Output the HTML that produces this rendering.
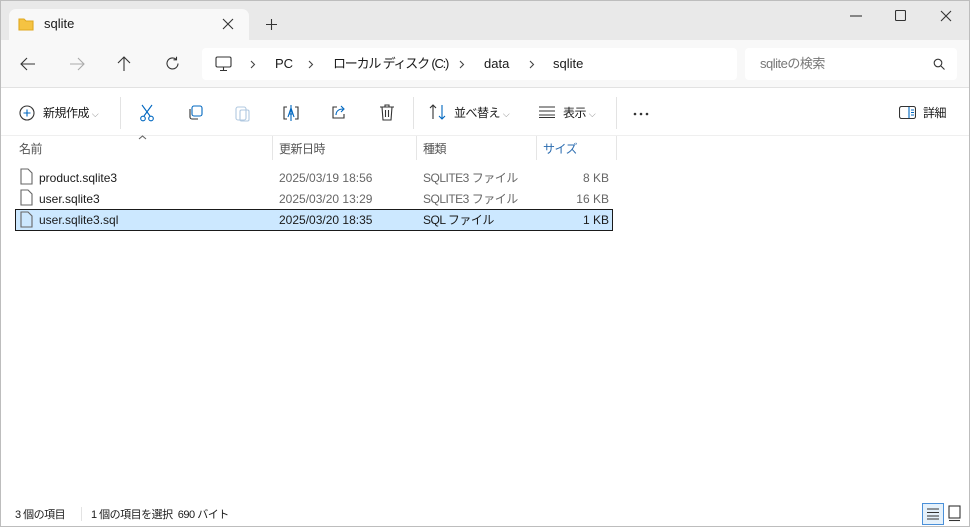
<!DOCTYPE html><html><head><meta charset="utf-8"><style>
*{box-sizing:border-box;margin:0;padding:0}
body{width:970px;height:527px;overflow:hidden;font-family:"Liberation Sans","Noto Sans CJK JP",sans-serif;font-size:12px;line-height:14px;color:#1a1a1a;background:#fff;position:relative}
.a{position:absolute;white-space:nowrap}
.win{position:absolute;left:0;top:0;width:970px;height:527px;border:1px solid #bdbdbd}
svg{position:absolute;fill:none;stroke:#333;stroke-width:1.1}
.hd{color:#555;font-size:12px;top:142px}
.r{position:absolute;font-size:12px;color:#1a1a1a;white-space:nowrap}
.g{color:#666}
.j{letter-spacing:-0.5px}
</style></head><body>
<div class="a" style="left:0;top:0;width:970px;height:40px;background:#e9e9e9"></div>
<div class="a" style="left:9px;top:9px;width:240px;height:32px;background:#f8f8f8;border-radius:7px 7px 0 0"></div>
<div class="a" style="left:0;top:40px;width:970px;height:48px;background:#f8f8f8;border-bottom:1px solid #e2e2e2"></div>
<svg style="left:18px;top:17px" width="16" height="14"><path d="M1 2h5l2 2h7v9H1z" fill="#f5c342" stroke="#e0a820"/></svg>
<div class="a" style="left:44px;top:17px;font-size:13px">sqlite</div>
<svg style="left:222px;top:18px" width="12" height="12"><path d="M1 1l10 10M11 1L1 11"/></svg>
<svg style="left:266px;top:19px" width="11" height="11"><path d="M5.5 0v11M0 5.5h11"/></svg>
<svg style="left:850px;top:15px" width="12" height="2"><path d="M0 1h12"/></svg>
<svg style="left:895px;top:10px" width="11" height="11"><rect x="0.5" y="0.5" width="10" height="10" rx="1"/></svg>
<svg style="left:940px;top:10px" width="12" height="12"><path d="M1 1l10 10M11 1L1 11"/></svg>
<svg style="left:20px;top:57px" width="16" height="14"><path d="M15 7H1M7 1L1 7l6 6"/></svg>
<svg style="left:69px;top:57px" width="16" height="14"><path d="M1 7h14M9 1l6 6-6 6" stroke="#aaa"/></svg>
<svg style="left:117px;top:56px" width="14" height="16"><path d="M7 15V1M1 7l6-6 6 6"/></svg>
<svg style="left:165px;top:56px" width="15" height="15"><path d="M13 7.5A5.5 5.5 0 1 1 11 3.2M11.5 0.8v3h-3"/></svg>
<div class="a" style="left:202px;top:48px;width:535px;height:32px;background:#fff;border-radius:4px"></div>
<div class="a" style="left:745px;top:48px;width:212px;height:32px;background:#fff;border-radius:4px"></div>
<svg style="left:215px;top:56px" width="17" height="16"><rect x="1" y="1" width="15" height="10" rx="1.5"/><path d="M8.5 11v3M5 14.5h7"/></svg>
<svg style="left:250px;top:60px" width="6" height="9"><path d="M1 1l3.5 3.5L1 8" stroke="#444"/></svg>
<div class="a" style="left:275px;top:57px;font-size:13px">PC</div>
<svg style="left:308px;top:60px" width="6" height="9"><path d="M1 1l3.5 3.5L1 8" stroke="#444"/></svg>
<div class="a j" style="left:333px;top:57px;font-size:13px;letter-spacing:-1.2px">ローカル ディスク (C:)</div>
<svg style="left:459px;top:60px" width="6" height="9"><path d="M1 1l3.5 3.5L1 8" stroke="#444"/></svg>
<div class="a" style="left:484px;top:57px;font-size:13px">data</div>
<svg style="left:529px;top:60px" width="6" height="9"><path d="M1 1l3.5 3.5L1 8" stroke="#444"/></svg>
<div class="a" style="left:553px;top:57px;font-size:13px">sqlite</div>
<div class="a j" style="left:760px;top:57px;font-size:13px;color:#777">sqliteの検索</div>
<svg style="left:933px;top:58px" width="12" height="12"><circle cx="5" cy="5" r="3.8"/><path d="M8 8l3.5 3.5"/></svg>
<svg style="left:19px;top:105px" width="16" height="16"><circle cx="8" cy="8" r="7"/><path d="M8 4.5v7M4.5 8h7" stroke="#0067c0"/></svg>
<div class="a j" style="left:43px;top:106px">新規作成 <span style="color:#888;font-size:9px">⌵</span></div>
<div class="a" style="left:120px;top:97px;width:1px;height:32px;background:#e3e3e3"></div>
<svg style="left:139px;top:104px" width="16" height="18"><path d="M3 1l8 11M13 1L5 12" stroke="#0067c0"/><circle cx="4" cy="14.5" r="2.3" stroke="#0067c0"/><circle cx="12" cy="14.5" r="2.3" stroke="#0067c0"/></svg>
<svg style="left:187px;top:105px" width="16" height="16"><rect x="5" y="1" width="10" height="10" rx="2" stroke="#0067c0"/><path d="M3 4v8a2 2 0 0 0 2 2h6" stroke="#333"/></svg>
<svg style="left:235px;top:104px" width="16" height="18"><rect x="1" y="3" width="10" height="13" rx="2" stroke="#b0c8e0"/><rect x="5" y="6" width="9" height="11" rx="1.5" stroke="#b0c8e0"/></svg>
<svg style="left:282px;top:104px" width="18" height="18"><path d="M5 3H2v12h3M13 3h3v12h-3"/><path d="M6 13l3-9 3 9M7 10h4M9 1v16" stroke="#0067c0"/></svg>
<svg style="left:331px;top:104px" width="16" height="16"><path d="M6 3H2v11h11v-4"/><path d="M5 11c0-4 3-6 7-6M10 2l3 3-3 3" stroke="#0067c0"/></svg>
<svg style="left:379px;top:104px" width="16" height="17"><path d="M1 3h14M6 3V1h4v2M3 3l1 13h8l1-13M6.5 6v7M9.5 6v7"/></svg>
<div class="a" style="left:413px;top:97px;width:1px;height:32px;background:#e3e3e3"></div>
<svg style="left:429px;top:104px" width="18" height="16"><path d="M4 15V1M1 4l3-3 3 3"/><path d="M13 1v14M10 12l3 3 3-3" stroke="#0067c0"/></svg>
<div class="a j" style="left:454px;top:106px">並べ替え <span style="color:#888;font-size:9px">⌵</span></div>
<svg style="left:539px;top:106px" width="16" height="12"><path d="M0 1h16M0 5h16M0 9h16M0 11.5h16"/></svg>
<div class="a j" style="left:563px;top:106px">表示 <span style="color:#888;font-size:9px">⌵</span></div>
<div class="a" style="left:616px;top:97px;width:1px;height:32px;background:#e3e3e3"></div>
<svg style="left:633px;top:112px" width="16" height="4"><circle cx="2" cy="2" r="1.3" fill="#333" stroke="none"/><circle cx="8" cy="2" r="1.3" fill="#333" stroke="none"/><circle cx="14" cy="2" r="1.3" fill="#333" stroke="none"/></svg>
<svg style="left:899px;top:106px" width="17" height="13"><rect x="0.5" y="0.5" width="16" height="12" rx="2"/><path d="M10 1v11M12 4h3M12 6.5h3M12 9h3" stroke="#0067c0"/></svg>
<div class="a j" style="left:923px;top:106px">詳細</div>
<div class="a" style="left:0;top:135px;width:970px;height:1px;background:#efefef"></div>
<svg style="left:138px;top:135px" width="9" height="5"><path d="M1 4l3.5-3 3.5 3" stroke="#666"/></svg>
<div class="a hd j" style="left:19px">名前</div>
<div class="a" style="left:272px;top:136px;width:1px;height:24px;background:#e5e5e5"></div>
<div class="a hd j" style="left:279px">更新日時</div>
<div class="a" style="left:416px;top:136px;width:1px;height:24px;background:#e5e5e5"></div>
<div class="a hd j" style="left:423px">種類</div>
<div class="a" style="left:536px;top:136px;width:1px;height:24px;background:#e5e5e5"></div>
<div class="a hd j" style="left:543px;color:#2b6cb0">サイズ</div>
<div class="a" style="left:616px;top:136px;width:1px;height:24px;background:#e5e5e5"></div>
<div class="a" style="left:15px;top:209px;width:598px;height:22px;background:#cce8ff;border:1px solid #1a1a1a"></div>
<svg style="left:20px;top:168px" width="13" height="17"><path d="M1 1h7l4 4v11H1z" stroke="#666"/></svg>
<svg style="left:20px;top:189px" width="13" height="17"><path d="M1 1h7l4 4v11H1z" stroke="#666"/></svg>
<svg style="left:20px;top:211px" width="13" height="17"><path d="M1 1h7l4 4v11H1z" stroke="#666"/></svg>
<div class="r" style="left:39px;top:171px">product.sqlite3</div>
<div class="r g" style="left:279px;top:171px">2025/03/19 18:56</div>
<div class="r g j" style="left:423px;top:171px">SQLITE3 ファイル</div>
<div class="r g" style="left:540px;top:171px;width:69px;text-align:right">8 KB</div>
<div class="r" style="left:39px;top:192px">user.sqlite3</div>
<div class="r g" style="left:279px;top:192px">2025/03/20 13:29</div>
<div class="r g j" style="left:423px;top:192px">SQLITE3 ファイル</div>
<div class="r g" style="left:540px;top:192px;width:69px;text-align:right">16 KB</div>
<div class="r" style="left:39px;top:213px">user.sqlite3.sql</div>
<div class="r" style="left:279px;top:213px">2025/03/20 18:35</div>
<div class="r j" style="left:423px;top:213px">SQL ファイル</div>
<div class="r" style="left:540px;top:213px;width:69px;text-align:right">1 KB</div>
<div class="r j" style="left:15px;top:508px;font-size:11px">3 個の項目</div>
<div class="a" style="left:81px;top:507px;width:1px;height:14px;background:#e3e3e3"></div>
<div class="r j" style="left:91px;top:508px;font-size:11px">1 個の項目を選択 &nbsp;690 バイト</div>
<div class="a" style="left:922px;top:503px;width:22px;height:22px;background:#e5f1fb;border:1px solid #4a90d9"></div>
<svg style="left:927px;top:508px" width="12" height="12"><path d="M0 1h12M0 4.5h12M0 8h12M0 11h12"/></svg>
<svg style="left:948px;top:505px" width="14" height="17"><rect x="1" y="1" width="11" height="12"/><path d="M1 15.5h11"/></svg>
<div class="win"></div>
</body></html>
